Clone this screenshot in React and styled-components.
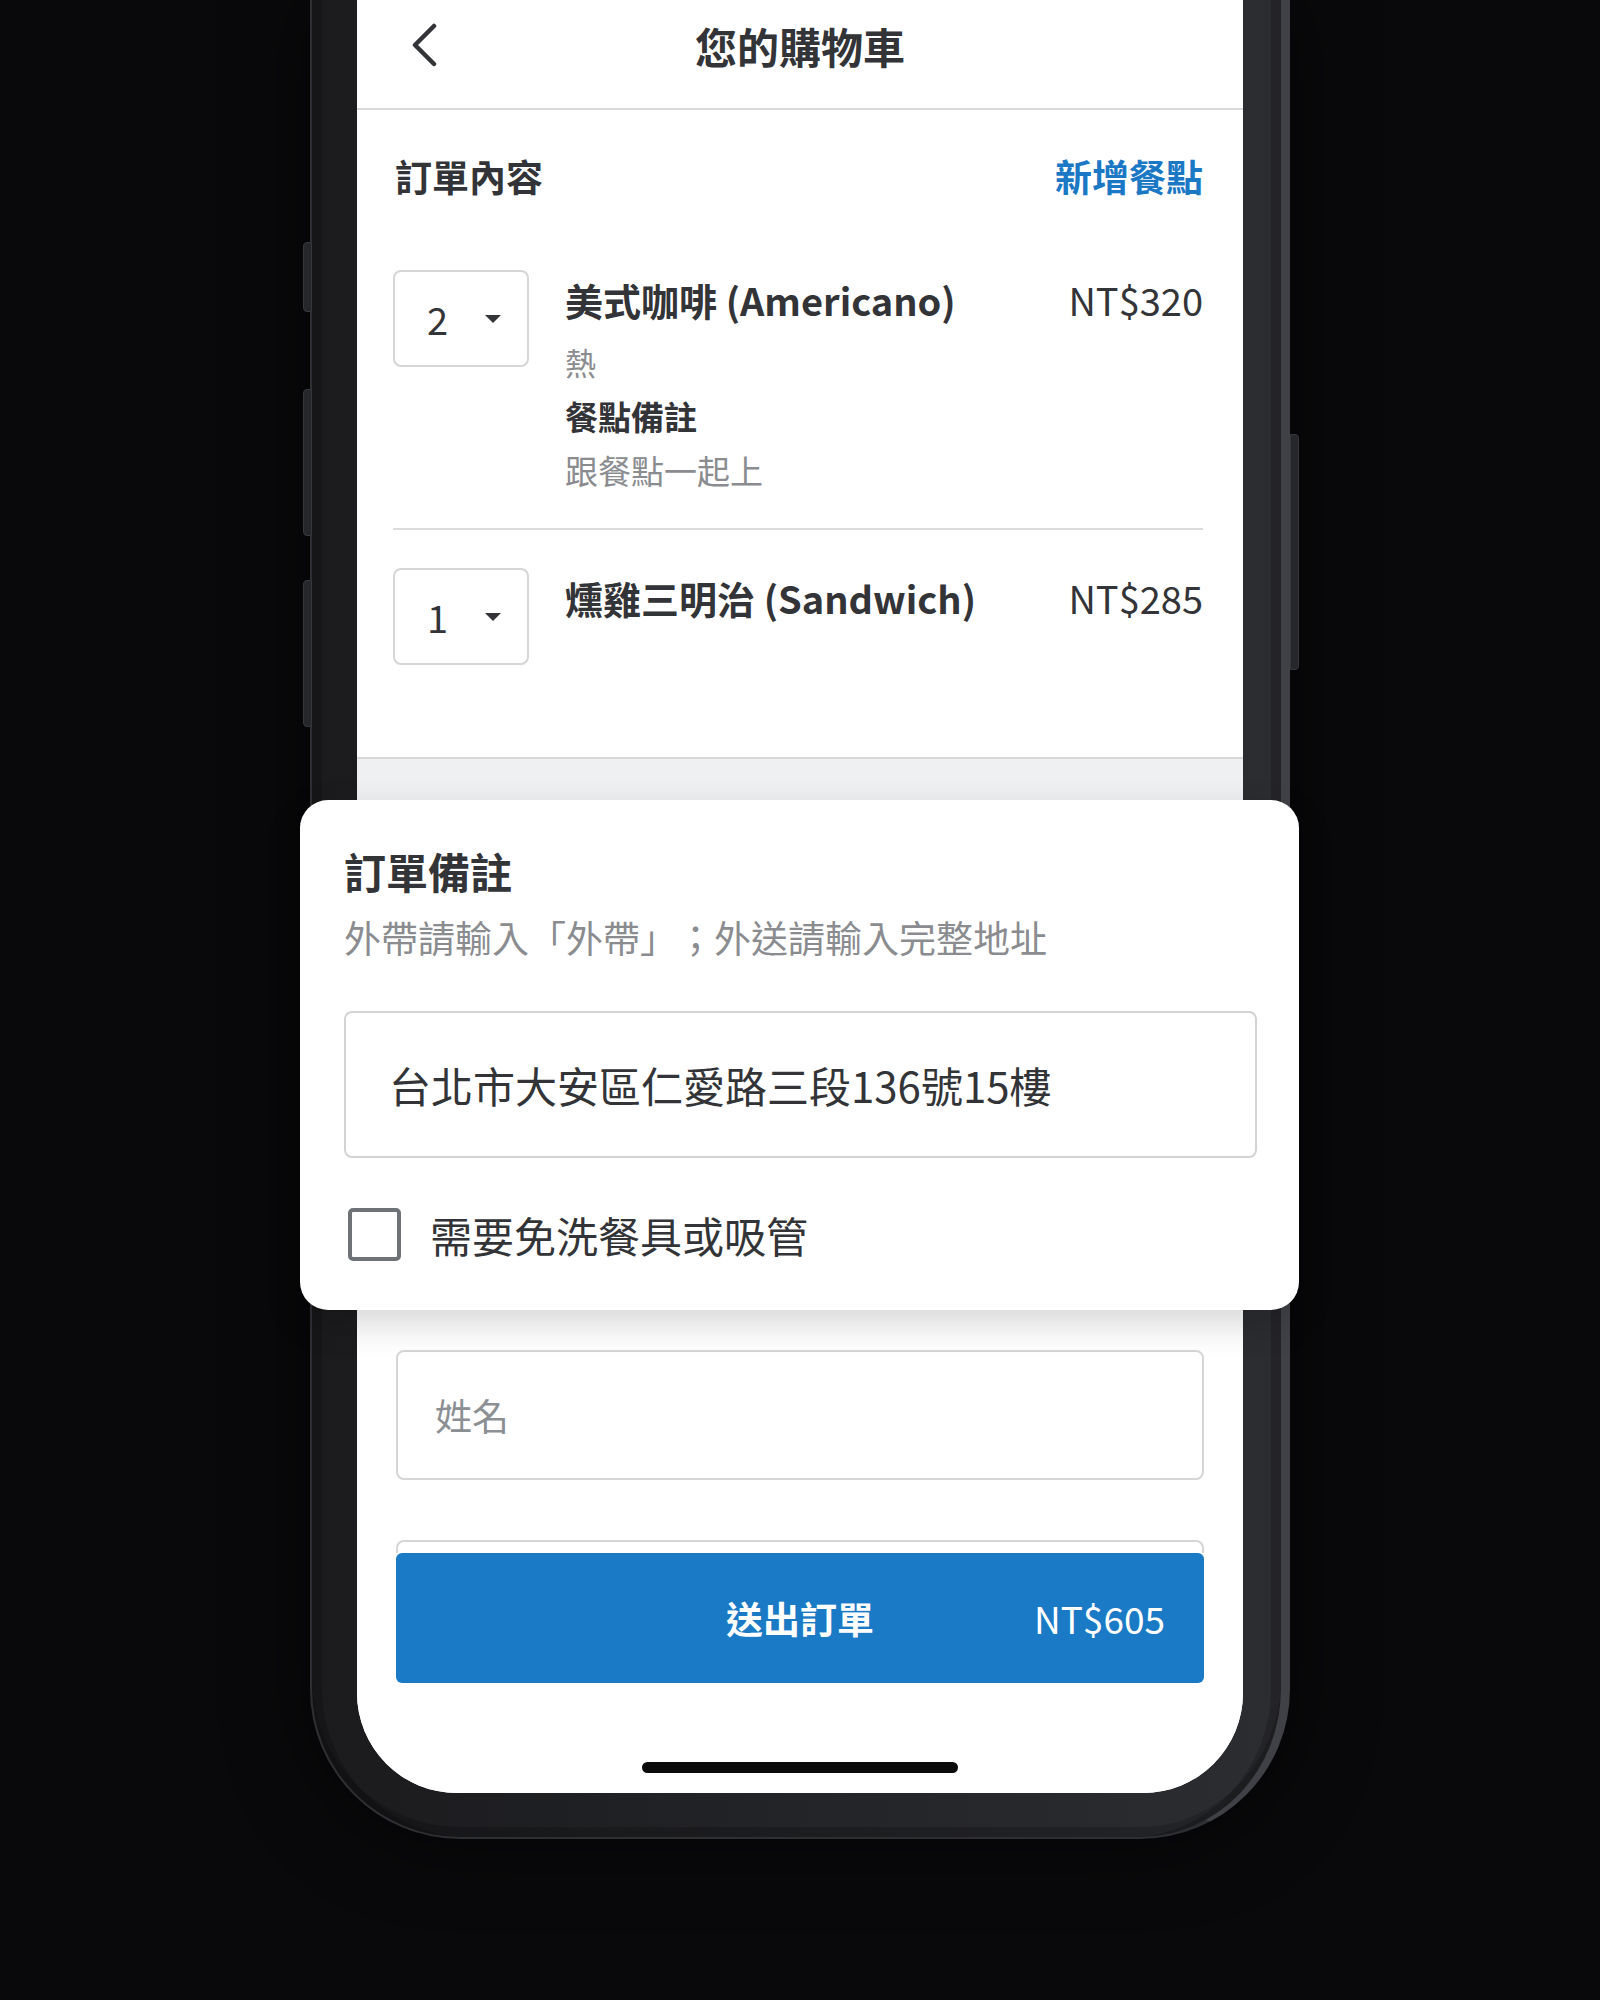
import React from 'react';
import styled, { createGlobalStyle } from 'styled-components';

const GlobalStyle = createGlobalStyle`
  html, body {
    margin: 0;
    padding: 0;
    background: #09090b;
  }
  * {
    box-sizing: border-box;
  }
`;

const FONT = `"Noto Sans CJK TC", "Noto Sans", sans-serif`;

const Stage = styled.div`
  height: 2000px;
  overflow: hidden;
  background: #09090b;
  display: flex;
  justify-content: center;
  align-items: flex-start;
  font-family: ${FONT};
  color: #333437;
  text-spacing-trim: space-all;
`;

const Phone = styled.div`
  position: relative;
  width: 980px;
  padding: 0 38px 44px 45px;
  background: linear-gradient(90deg, #1b1b1e 0%, #222326 45%, #2c2d31 100%);
  border: 2px solid #2e2f33;
  border-right: 9px solid #404146;
  border-top: none;
  border-radius: 0 0 150px 150px;
  box-shadow: inset 10px 0 0 rgba(0, 0, 0, 0.18), inset -10px 0 0 rgba(0, 0, 0, 0.18),
    inset 0 -10px 0 rgba(0, 0, 0, 0.18), 0 0 80px rgba(0, 0, 0, 0.6);
`;

const SideButton = styled.div`
  position: absolute;
  top: ${(p) => p.top}px;
  height: ${(p) => p.h}px;
  width: 9px;
  background: #26272a;
  border: 1px solid #36373b;
  ${(p) => (p.right ? 'right: -18px; border-radius: 0 4px 4px 0;' : 'left: -9px; border-radius: 4px 0 0 4px;')}
`;

const Screen = styled.div`
  position: relative;
  height: 1793px;
  background: #fff;
  border-radius: 0 0 100px 100px;
  overflow: hidden;
  display: flex;
  flex-direction: column;
`;

const Header = styled.header`
  height: 110px;
  flex-shrink: 0;
  display: grid;
  grid-template-columns: 1fr auto 1fr;
  align-items: center;
  padding: 0 54px;
  border-bottom: 2px solid #d9d9db;
`;

const BackButton = styled.button`
  border: none;
  background: none;
  padding: 0;
  width: 26px;
  height: 44px;
  display: flex;
  cursor: pointer;
  margin-top: -18px;
`;

const HeaderTitle = styled.h1`
  margin: 0;
  margin-top: -18px;
  font-size: 42px;
  font-weight: 700;
  color: #333437;
`;

const Section = styled.section`
  flex-shrink: 0;
  padding: 38px 40px 0 36px;
  border-bottom: 2px solid #d9d9db;
`;

const SectionHead = styled.div`
  display: flex;
  justify-content: space-between;
  align-items: center;
  height: 55px;
  padding-left: 2px;
  margin-bottom: 67px;
`;

const SectionTitle = styled.h2`
  margin: 0;
  font-size: 37px;
  font-weight: 700;
  color: #333437;
`;

const LinkButton = styled.button`
  border: none;
  background: none;
  padding: 0;
  font-family: ${FONT};
  font-size: 37px;
  font-weight: 700;
  color: #1b78c4;
  cursor: pointer;
`;

const ItemRow = styled.div`
  display: grid;
  grid-template-columns: 136px 1fr auto;
  column-gap: 36px;
  align-items: start;
  padding: ${(p) => (p.first ? '0 0 31px' : '38px 0 92px')};
  border-bottom: ${(p) => (p.first ? '2px solid #dcdcde' : 'none')};
`;

const QtySelect = styled.div`
  height: 97px;
  border: 2px solid #d6d6d8;
  border-radius: 8px;
  display: flex;
  align-items: center;
  padding: 0 26px 0 32px;
  justify-content: space-between;
  font-size: 38px;
  color: #333437;
`;

const Caret = styled.span`
  width: 0;
  height: 0;
  border-left: 8px solid transparent;
  border-right: 8px solid transparent;
  border-top: 8px solid #333437;
`;

const ItemBody = styled.div`
  display: flex;
  flex-direction: column;
  padding-top: 4px;
`;

const ItemName = styled.div`
  font-size: 38px;
  font-weight: 700;
  line-height: 52px;
  color: #333437;
  margin-bottom: ${(p) => (p.withDetails ? '9px' : '0')};
`;

const Detail = styled.div`
  font-size: ${(p) => (p.small ? '31px' : '33px')};
  line-height: 54px;
  font-weight: ${(p) => (p.strong ? 700 : 400)};
  color: ${(p) => (p.strong ? '#333437' : '#8a8c90')};
`;

const Price = styled.div`
  padding-top: 4px;
  font-size: 38px;
  line-height: 52px;
  color: #333437;
`;

const GreyBand = styled.div`
  height: 42px;
  flex-shrink: 0;
  background: #eff0f2;
`;

const FormSection = styled.section`
  flex-shrink: 0;
  padding: 0 39px;
  display: flex;
  flex-direction: column;
`;

const NotesSlot = styled.div`
  height: 507px;
`;

const Field = styled.div`
  height: 130px;
  margin-top: ${(p) => p.gap}px;
  border: 2px solid #d6d6d8;
  border-radius: 8px;
  display: flex;
  align-items: center;
  padding: 0 37px;
  font-size: 37px;
  color: #8c8f93;
`;

const Footer = styled.div`
  position: absolute;
  left: 0;
  right: 0;
  bottom: 0;
  height: 240px;
  padding: 0 39px;
  background: #fff;
  display: flex;
  flex-direction: column;
  align-items: center;
`;

const SubmitButton = styled.button`
  width: 100%;
  height: 130px;
  border: none;
  border-radius: 6px;
  background: #1b7ac5;
  color: #fff;
  font-family: ${FONT};
  display: grid;
  grid-template-columns: 1fr auto 1fr;
  align-items: center;
  padding: 0 39px;
  cursor: pointer;
`;

const SubmitLabel = styled.span`
  font-size: 37px;
  font-weight: 700;
`;

const SubmitPrice = styled.span`
  justify-self: end;
  font-size: 37px;
  font-weight: 400;
`;

const HomeIndicator = styled.div`
  width: 316px;
  height: 11px;
  border-radius: 6px;
  background: #0b0b0c;
  margin-top: auto;
  margin-bottom: 20px;
`;

const NotesCard = styled.div`
  position: absolute;
  left: -12px;
  top: 800px;
  width: 999px;
  padding: 41px 42px 45px 44px;
  background: #fff;
  border-radius: 28px;
  box-shadow: 0 14px 36px rgba(0, 0, 0, 0.16);
  display: flex;
  flex-direction: column;
`;

const CardTitle = styled.h3`
  margin: 0;
  font-size: 42px;
  line-height: 59px;
  font-weight: 700;
  color: #333437;
`;

const CardHint = styled.p`
  margin: 11px 0 0;
  font-size: 37px;
  line-height: 52px;
  color: #8a8c90;
`;

const AddressBox = styled.div`
  margin-top: 48px;
  height: 147px;
  border: 2px solid #d3d3d5;
  border-radius: 8px;
  display: flex;
  align-items: center;
  padding: 0 43px;
  font-size: 42px;
  color: #333437;
`;

const CheckRow = styled.label`
  margin-top: 46px;
  display: flex;
  align-items: center;
  gap: 29px;
  padding-left: 4px;
  font-size: 42px;
  color: #333437;
  cursor: pointer;
`;

const CheckBox = styled.span`
  width: 53px;
  height: 53px;
  border: 4px solid #6f7276;
  border-radius: 5px;
  flex-shrink: 0;
`;

const items = [
  {
    qty: 2,
    name: '美式咖啡 (Americano)',
    price: 'NT$320',
    option: '熱',
    note: '跟餐點一起上',
  },
  { qty: 1, name: '燻雞三明治 (Sandwich)', price: 'NT$285' },
];

const App = () => {
  return (
    <Stage>
      <GlobalStyle />
      <Phone>
        <SideButton top={242} h={70} />
        <SideButton top={389} h={147} />
        <SideButton top={580} h={147} />
        <SideButton right top={434} h={236} />
        <Screen>
          <Header>
            <BackButton aria-label="返回">
              <svg width="26" height="44" viewBox="0 0 26 44" fill="none">
                <polyline
                  points="23,3 4,22 23,41"
                  stroke="#333437"
                  strokeWidth="4.5"
                  strokeLinecap="round"
                  strokeLinejoin="round"
                />
              </svg>
            </BackButton>
            <HeaderTitle>您的購物車</HeaderTitle>
            <span />
          </Header>

          <Section>
            <SectionHead>
              <SectionTitle>訂單內容</SectionTitle>
              <LinkButton>新增餐點</LinkButton>
            </SectionHead>
            {items.map((item, i) => (
              <ItemRow key={item.name} first={i === 0}>
                <QtySelect>
                  {item.qty}
                  <Caret />
                </QtySelect>
                <ItemBody>
                  <ItemName withDetails={!!item.option}>{item.name}</ItemName>
                  {item.option && (
                    <>
                      <Detail small>{item.option}</Detail>
                      <Detail strong>餐點備註</Detail>
                      <Detail>{item.note}</Detail>
                    </>
                  )}
                </ItemBody>
                <Price>{item.price}</Price>
              </ItemRow>
            ))}
          </Section>

          <GreyBand />

          <FormSection>
            <NotesSlot />
            <Field gap={42}>姓名</Field>
            <Field gap={60}>電話</Field>
          </FormSection>

          <Footer>
            <SubmitButton>
              <span />
              <SubmitLabel>送出訂單</SubmitLabel>
              <SubmitPrice>NT$605</SubmitPrice>
            </SubmitButton>
            <HomeIndicator />
          </Footer>
        </Screen>

        <NotesCard>
          <CardTitle>訂單備註</CardTitle>
          <CardHint>外帶請輸入「外帶」；外送請輸入完整地址</CardHint>
          <AddressBox>台北市大安區仁愛路三段136號15樓</AddressBox>
          <CheckRow>
            <CheckBox />
            需要免洗餐具或吸管
          </CheckRow>
        </NotesCard>
      </Phone>
    </Stage>
  );
};

export default App;
